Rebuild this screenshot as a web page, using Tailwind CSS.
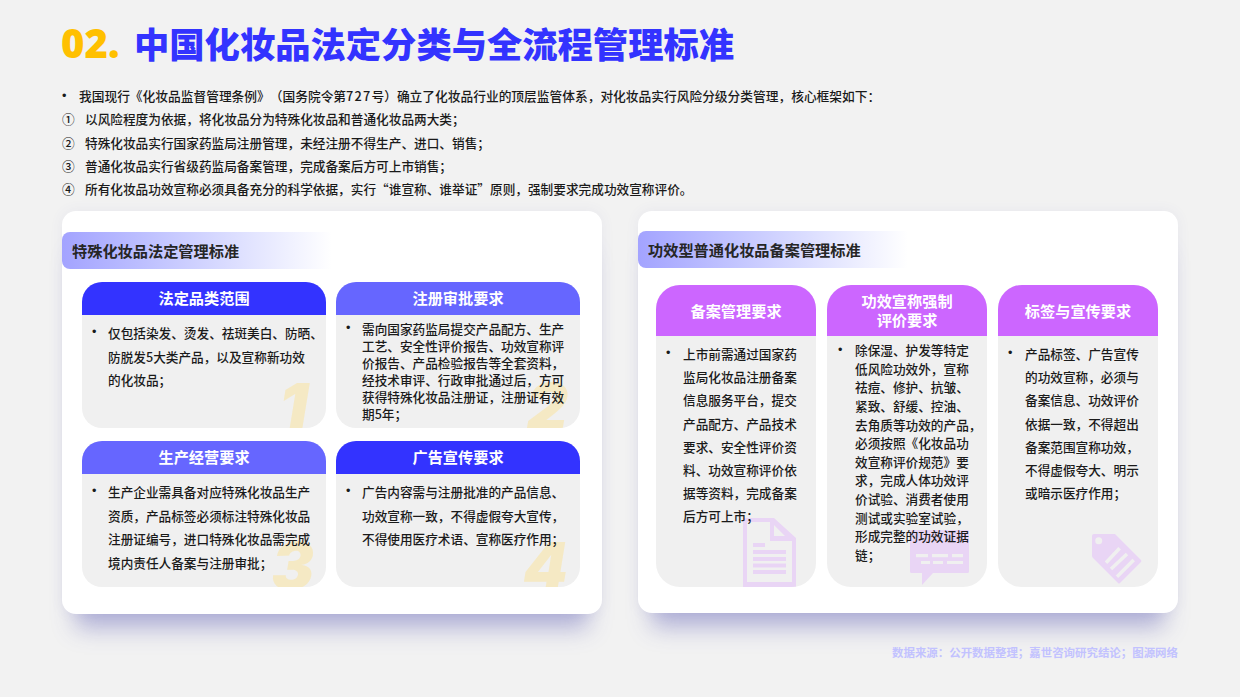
<!DOCTYPE html>
<html lang="zh">
<head>
<meta charset="utf-8">
<script src="https://cdn.jsdelivr.net/npm/@tailwindcss/browser@4"></script>
</head>
<body class="m-0">
<div class="w-[1240px] h-[697px] bg-[#f2f2f2] overflow-hidden px-[62px] pt-[19px] text-[#1a1a1a] [text-spacing-trim:space-all] font-['Noto_Sans_CJK_SC','Noto_Sans',sans-serif]">
  <h1 class="h-[48px] flex items-center font-black text-[35.3px] leading-[48px] text-[#3333ff]">
    <span class="text-[#ffc000] text-[40px] w-[73px] shrink-0 -ml-[1px] mr-[1px] font-extrabold font-['Open_Sans',sans-serif]">02.</span>
    <span class="-ml-[1px]">中国化妆品法定分类与全流程管理标准</span>
  </h1>
  <div class="mt-[17px] text-[12.67px] leading-[23.25px] font-medium">
    <div class="flex text-[12.72px]"><span class="w-[17px] shrink-0 font-['Liberation_Sans',sans-serif]">•</span><span>我国现行《化妆品监督管理条例》（国务院令第<span class="tracking-[1.2px]">727</span>号）确立了化妆品行业的顶层监管体系，对化妆品实行风险分级分类管理，核心框架如下：</span></div>
    <div class="flex"><span class="w-[23px] shrink-0">①</span><span>以风险程度为依据，将化妆品分为特殊化妆品和普通化妆品两大类；</span></div>
    <div class="flex"><span class="w-[23px] shrink-0">②</span><span>特殊化妆品实行国家药监局注册管理，未经注册不得生产、进口、销售；</span></div>
    <div class="flex"><span class="w-[23px] shrink-0">③</span><span>普通化妆品实行省级药监局备案管理，完成备案后方可上市销售；</span></div>
    <div class="flex"><span class="w-[23px] shrink-0">④</span><span>所有化妆品功效宣称必须具备充分的科学依据，实行“谁宣称、谁举证”原则，强制要求完成功效宣称评价。</span></div>
  </div>

  <div class="mt-[11px] flex gap-[36px] items-start">
    <!-- left panel -->
    <section class="w-[540px] h-[403px] bg-white rounded-[14px] pt-[21px] shadow-[0_28px_22px_-14px_rgba(70,70,170,0.38),0_0_14px_rgba(90,90,170,0.07)]">
      <h2 class="w-[270px] h-[37px] pl-[10px] flex items-center rounded-l-[8px] bg-gradient-to-r from-[#a3a3ff] to-white text-[15.2px] font-bold text-[#262626]">特殊化妆品法定管理标准</h2>
      <div class="mt-[13px] ml-[20px] grid grid-cols-[244px_244px] gap-x-[10px] gap-y-[13px]">
        <article class="relative h-[146px] rounded-[20px] overflow-hidden bg-[#f0f0f0]">
          <div class="h-[33px] pb-[2px] flex items-center justify-center bg-[#3333ff] text-white font-bold text-[15.2px]">法定品类范围</div>
          <span class="absolute right-[18px] -bottom-[11px] text-[64px] leading-none font-black italic text-[#f5e9c4] font-['Inter',sans-serif]">1</span>
          <div class="relative flex pt-[6px] pl-[10px] pr-[2px] text-[12.65px] leading-[23.5px] font-medium"><span class="w-[16px] shrink-0 font-['Liberation_Sans',sans-serif]">•</span><span>仅包括染发、烫发、祛斑美白、防晒、<br>防脱发5大类产品，以及宣称新功效<br>的化妆品；</span></div>
        </article>
        <article class="relative h-[146px] rounded-[20px] overflow-hidden bg-[#f0f0f0]">
          <div class="h-[33px] pb-[2px] flex items-center justify-center bg-[#6666ff] text-white font-bold text-[15.2px]">注册审批要求</div>
          <span class="absolute right-[12px] -bottom-[11px] text-[64px] leading-none font-black italic text-[#f5e9c4] font-['Inter',sans-serif]">2</span>
          <div class="relative flex pt-[5px] pl-[10px] pr-[2px] text-[12.65px] leading-[17px] font-medium"><span class="w-[16px] shrink-0 font-['Liberation_Sans',sans-serif]">•</span><span>需向国家药监局提交产品配方、生产<br>工艺、安全性评价报告、功效宣称评<br>价报告、产品检验报告等全套资料，<br>经技术审评、行政审批通过后，方可<br>获得特殊化妆品注册证，注册证有效<br>期5年；</span></div>
        </article>
        <article class="relative h-[146px] rounded-[20px] overflow-hidden bg-[#f0f0f0]">
          <div class="h-[33px] pb-[2px] flex items-center justify-center bg-[#6666ff] text-white font-bold text-[15.2px]">生产经营要求</div>
          <span class="absolute right-[12px] -bottom-[11px] text-[64px] leading-none font-black italic text-[#f5e9c4] font-['Inter',sans-serif]">3</span>
          <div class="relative flex pt-[6px] pl-[10px] pr-[2px] text-[12.65px] leading-[23.5px] font-medium"><span class="w-[16px] shrink-0 font-['Liberation_Sans',sans-serif]">•</span><span>生产企业需具备对应特殊化妆品生产<br>资质，产品标签必须标注特殊化妆品<br>注册证编号，进口特殊化妆品需完成<br>境内责任人备案与注册审批；</span></div>
        </article>
        <article class="relative h-[146px] rounded-[20px] overflow-hidden bg-[#f0f0f0]">
          <div class="h-[33px] pb-[2px] flex items-center justify-center bg-[#3333ff] text-white font-bold text-[15.2px]">广告宣传要求</div>
          <span class="absolute right-[12px] -bottom-[11px] text-[64px] leading-none font-black italic text-[#f5e9c4] font-['Inter',sans-serif]">4</span>
          <div class="relative flex pt-[6px] pl-[10px] pr-[2px] text-[12.65px] leading-[23.5px] font-medium"><span class="w-[16px] shrink-0 font-['Liberation_Sans',sans-serif]">•</span><span>广告内容需与注册批准的产品信息、<br>功效宣称一致，不得虚假夸大宣传，<br>不得使用医疗术语、宣称医疗作用；</span></div>
        </article>
      </div>
    </section>

    <!-- right panel -->
    <section class="w-[540px] h-[402px] bg-white rounded-[14px] pt-[20px] shadow-[0_28px_22px_-14px_rgba(70,70,170,0.38),0_0_14px_rgba(90,90,170,0.07)]">
      <h2 class="w-[270px] h-[37px] pl-[10px] flex items-center rounded-l-[8px] bg-gradient-to-r from-[#a3a3ff] to-white text-[15.2px] font-bold text-[#262626]">功效型普通化妆品备案管理标准</h2>
      <div class="mt-[17px] ml-[18px] flex gap-[11px]">
        <article class="relative w-[160px] h-[302px] rounded-[24px] overflow-hidden bg-[#f0f0f0]">
          <div class="h-[51px] pb-[2px] flex items-center justify-center bg-[#cc66ff] text-white font-bold text-[15.2px] leading-[18.5px] text-center">备案管理要求</div>
          <svg class="absolute right-[20px] bottom-0" width="53" height="69" viewBox="0 0 53 69">
            <path fill="#e9d5f5" fill-rule="evenodd" d="M0 0H31L53 20V69H0ZM4 4V64H49V23H27V4ZM31 7V18H42Z"/>
            <path fill="#e9d5f5" d="M10 25h12v4H10ZM10 32h33v4H10ZM10 39h33v4H10ZM10 45.5h33v4H10ZM10 52h33v4H10Z"/>
          </svg>
          <div class="relative flex pt-[6px] pl-[10px] text-[12.65px] leading-[23.1px] font-medium"><span class="w-[17px] shrink-0 font-['Liberation_Sans',sans-serif]">•</span><span>上市前需通过国家药<br>监局化妆品注册备案<br>信息服务平台，提交<br>产品配方、产品技术<br>要求、安全性评价资<br>料、功效宣称评价依<br>据等资料，完成备案<br>后方可上市；</span></div>
        </article>
        <article class="relative w-[160px] h-[302px] rounded-[24px] overflow-hidden bg-[#f0f0f0]">
          <div class="h-[51px] pb-[2px] flex items-center justify-center bg-[#cc66ff] text-white font-bold text-[15.2px] leading-[18.5px] text-center">功效宣称强制<br>评价要求</div>
          <svg class="absolute right-[18px] bottom-[2px]" width="59" height="55" viewBox="0 0 59 55">
            <path fill="#e9d5f5" d="M1.5 0H57.5A1.5 1.5 0 0 1 59 1.5V41.5A1.5 1.5 0 0 1 57.5 43H23L12 55V43H1.5A1.5 1.5 0 0 1 0 41.5V1.5A1.5 1.5 0 0 1 1.5 0Z"/>
            <path fill="#f0f0f0" d="M6 24h12v3.3H6ZM22 24h16v3.3H22ZM42 24h11v3.3H42ZM11 31h9v3H11ZM23 31h10v3H23ZM37 31h16v3H37Z"/>
          </svg>
          <div class="relative flex pt-[5px] pl-[11px] text-[12.65px] leading-[18.6px] font-medium"><span class="w-[17px] shrink-0 font-['Liberation_Sans',sans-serif]">•</span><span>除保湿、护发等特定<br>低风险功效外，宣称<br>祛痘、修护、抗皱、<br>紧致、舒缓、控油、<br>去角质等功效的产品，<br>必须按照《化妆品功<br>效宣称评价规范》要<br>求，完成人体功效评<br>价试验、消费者使用<br>测试或实验室试验，<br>形成完整的功效证据<br>链；</span></div>
        </article>
        <article class="relative w-[160px] h-[302px] rounded-[24px] overflow-hidden bg-[#f0f0f0]">
          <div class="h-[51px] pb-[2px] flex items-center justify-center bg-[#cc66ff] text-white font-bold text-[15.2px] leading-[18.5px] text-center">标签与宣传要求</div>
          <svg class="absolute right-[16px] bottom-[3px]" width="50" height="50" viewBox="0 0 50 50">
            <path fill="#e9d5f5" d="M2 0H23L49 26Q50 27 49 28L28 49Q27 50 26 49L1 24Q0 23 0 22V2Q0 0 2 0Z"/>
            <circle cx="6.7" cy="6.7" r="3.5" fill="#f0f0f0"/>
            <path stroke="#f0f0f0" stroke-width="3.5" fill="none" d="M27.6 14.3L14 28.7M35 20L19 35M41.7 26L25 42.7"/>
          </svg>
          <div class="relative flex pt-[6px] pl-[10px] text-[12.65px] leading-[23.1px] font-medium"><span class="w-[17px] shrink-0 font-['Liberation_Sans',sans-serif]">•</span><span>产品标签、广告宣传<br>的功效宣称，必须与<br>备案信息、功效评价<br>依据一致，不得超出<br>备案范围宣称功效，<br>不得虚假夸大、明示<br>或暗示医疗作用；</span></div>
        </article>
      </div>
    </section>
  </div>
  <p class="mt-[30px] text-right text-[11.44px] leading-[16px] font-bold text-[#c2c2ff]">数据来源：公开数据整理；嘉世咨询研究结论；图源网络</p>
</div>
</body>
</html>
